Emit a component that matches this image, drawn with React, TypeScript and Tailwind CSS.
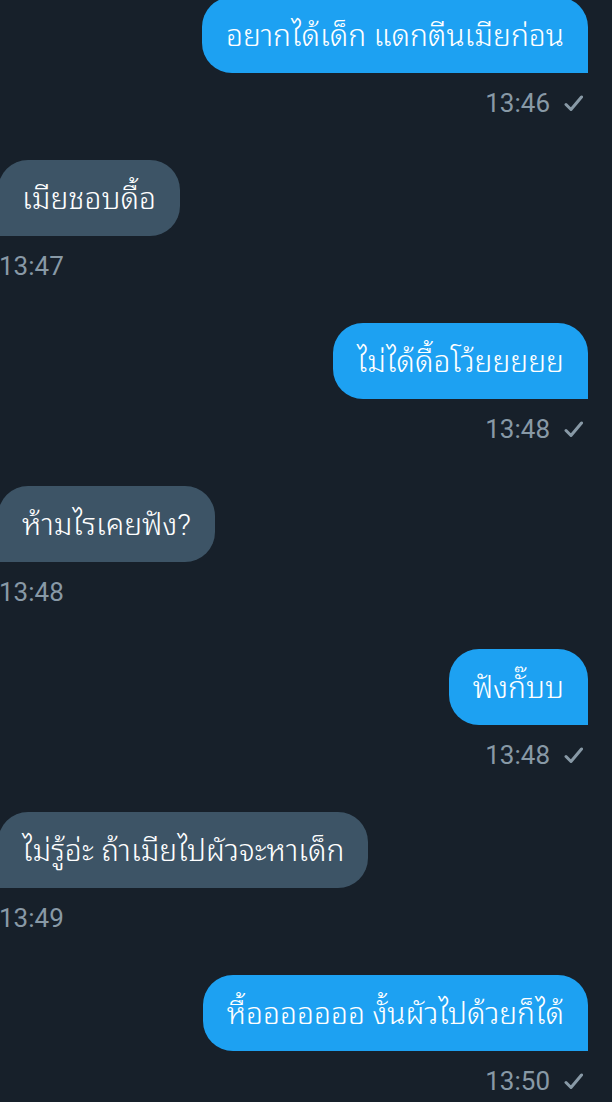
import React from "react";

type Msg = { text: string; time: string; me: boolean };

const msgs: Msg[] = [
  { text: "อยากได้เด็ก แดกตีนเมียก่อน", time: "13:46", me: true },
  { text: "เมียชอบดื้อ", time: "13:47", me: false },
  { text: "ไม่ได้ดื้อโว้ยยยยย", time: "13:48", me: true },
  { text: "ห้ามไรเคยฟัง?", time: "13:48", me: false },
  { text: "ฟังกั๊บบ", time: "13:48", me: true },
  { text: "ไม่รู้อ่ะ ถ้าเมียไปผัวจะหาเด็ก", time: "13:49", me: false },
  { text: "หื้อออออออ งั้นผัวไปด้วยก็ได้", time: "13:50", me: true },
];

function Check() {
  return (
    <svg width="19" height="17" viewBox="0 0 19 17" fill="none">
      <path d="M2 9.5 L7 14.5 L17.5 2" stroke="#8899a6" strokeWidth="3" strokeLinecap="round" strokeLinejoin="round" />
    </svg>
  );
}

export default function App() {
  return (
    <div
      className="w-[612px] h-[1102px] overflow-hidden bg-[#17202a]"
      style={{ fontFamily: "Roboto, 'Noto Sans Thai Looped', 'Loma', 'Garuda', 'Noto Sans Thai', 'Noto Sans', sans-serif" }}
    >
      <div className="flex flex-col mt-[-3px]">
        {msgs.map((m, i) => (
          <div key={i} className={`flex flex-col h-[163px] ${m.me ? "items-end" : "items-start"}`}>
            {m.me ? (
              <div className="mr-[24px] h-[76px] flex items-center px-[24px] rounded-[30px] rounded-br-none bg-[#1da1f2] text-white text-[30px] font-light whitespace-nowrap">
                {m.text}
              </div>
            ) : (
              <div className="ml-[-2px] h-[76px] flex items-center px-[24px] rounded-[30px] rounded-bl-none bg-[#3d5466] text-white text-[30px] font-light whitespace-nowrap">
                {m.text}
              </div>
            )}
            {m.me ? (
              <div className="mt-[15px] mr-[29px] h-[30px] flex items-center gap-[14px] text-[26px] text-[#8899a6]">
                <span>{m.time}</span>
                <Check />
              </div>
            ) : (
              <div className="mt-[15px] ml-[-1px] h-[30px] flex items-center text-[26px] text-[#8899a6]">
                <span>{m.time}</span>
              </div>
            )}
          </div>
        ))}
      </div>
    </div>
  );
}
